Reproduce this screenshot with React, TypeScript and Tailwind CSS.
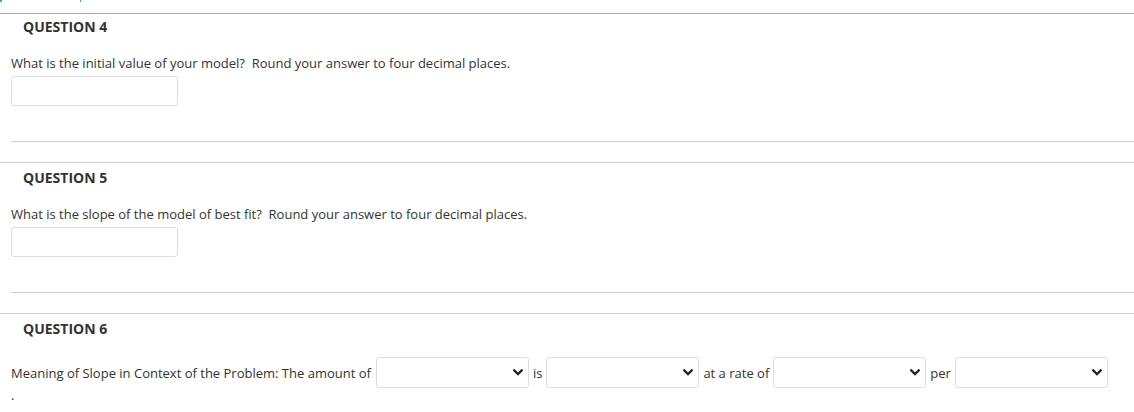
import React from 'react';

function Chevron() {
  return (
    <svg width="10" height="7" viewBox="0 0 10 7" className="shrink-0">
      <path d="M1.2 1.3L5 5.1L8.8 1.3" fill="none" stroke="#222" strokeWidth="2.2" strokeLinecap="square" />
    </svg>
  );
}

function Dropdown() {
  return (
    <div className="flex h-[31px] w-[153px] shrink-0 items-center justify-end rounded-[3px] border border-[#dedede] bg-white pr-[5px]">
      <Chevron />
    </div>
  );
}

function TextQuestion({ num, text, first }: { num: number; text: string; first?: boolean }) {
  return (
    <section className={first ? 'border-t border-[#ababab]' : 'mt-[20px] border-t border-[#d0d0d0]'}>
      <h3 className={`${first ? 'mt-[3px]' : 'mt-[5px]'} h-[20px] pl-[23px] text-[14px] font-bold leading-[20px] text-[#333]`}>
        QUESTION {num}
      </h3>
      <p className="mt-[17px] whitespace-pre pl-[11px] text-[13px] leading-[18px] text-[#333]">{text}</p>
      <div className="ml-[11px] mt-[4px] h-[30px] w-[167px] rounded-[3px] border border-[#dedede] bg-white" />
      <div className="ml-[11px] mt-[35px] h-px bg-[#d0d0d0]" />
    </section>
  );
}

export default function App() {
  return (
    <div className="h-[412px] w-[1134px] overflow-hidden bg-white font-['Open_Sans',sans-serif] text-[#333]">
      <div className="flex h-[13px] items-start">
        <div className="h-[2px] w-[2px] bg-[#3aa6cf]" />
        <div className="ml-[78px] h-[2px] w-px bg-[#3aa6cf]" />
      </div>

      <TextQuestion
        num={4}
        first
        text="What is the initial value of your model?  Round your answer to four decimal places."
      />
      <TextQuestion
        num={5}
        text="What is the slope of the model of best fit?  Round your answer to four decimal places."
      />

      <section className="mt-[20px] border-t border-[#d0d0d0]">
        <h3 className="mt-[5px] h-[20px] pl-[23px] text-[14px] font-bold leading-[20px] text-[#333]">QUESTION 6</h3>
        <div className="mt-[18px] flex items-center pl-[11px] text-[13px] leading-[18px] text-[#333]">
          <span>Meaning of Slope in Context of the Problem: The amount of</span>
          <div className="ml-[5px]">
            <Dropdown />
          </div>
          <span className="mx-[4px]">is</span>
          <Dropdown />
          <span className="mx-[4px]">at a rate of</span>
          <Dropdown />
          <span className="mx-[4px]">per</span>
          <Dropdown />
        </div>
        <p className="mt-[-2px] pl-[11px] text-[13px] leading-[18px] text-[#333]">.</p>
      </section>
    </div>
  );
}
